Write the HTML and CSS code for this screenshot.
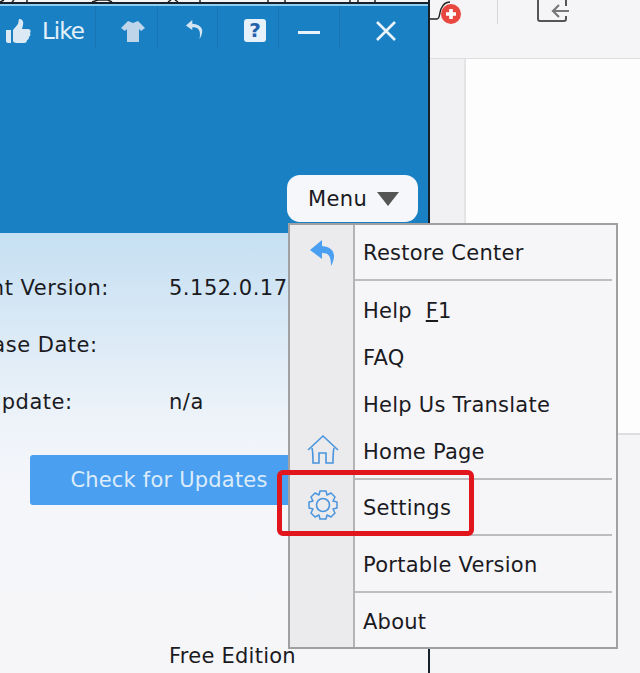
FILE: index.html
```html
<!DOCTYPE html>
<html lang="en">
<head>
<meta charset="utf-8">
<title>Menu</title>
<link rel="stylesheet" href="styles.css">
</head>
<body>
<div class="stage">
  <section class="window">
    <svg class="top-strip" width="430" height="6" viewBox="0 0 430 6"><rect y="2" width="430" height="2" fill="#15202a"/><rect y="4" width="430" height="2" fill="#8fcdf0"/><path d="M0 2l4-2M12 2l2-2M27 2v-2M92 2l6-2h10l4 2M168 2l3-2M178 2l-3-2M200 2v-2M268 2v-2M285 2v-2M350 2v-2M358 2v-2M375 2v-2" stroke="#222" stroke-width="1.5" fill="none"/></svg>
    <header class="hero">
      <div class="toolbar">
        <div class="tool tool-like">
          <svg width="26" height="26" viewBox="0 0 26 26"><path d="M1 12h5v13H3a2 2 0 0 1-2-2zM8 12l5-6 1-5c3 0 5 2 4 6l-1 4h6c3 0 3 3 2 4 1 2 0 3-1 4 0 2-1 3-2 3 0 2-1 3-3 3H12c-2 0-4-1-4-2z" fill="#dbe9f4"/></svg>
          <span>Like</span>
        </div>
        <div class="tool tool-shirt">
          <svg width="26" height="22" viewBox="0 0 26 22"><path d="M8 1l5 2 5-2 7 7-4 3-2-2v13H7V9l-2 2-4-3z" fill="#bfd6ea"/></svg>
        </div>
        <div class="tool tool-back">
          <svg width="20" height="24" viewBox="0 0 22 26"><path d="M8 1L1 7l7 5V9c6 0 10 2 8 13 6-10 3-16-8-17z" fill="#d3e4f2"/></svg>
        </div>
        <div class="tool tool-help"><span class="help-box">?</span></div>
        <div class="tool tool-min"><span class="min-bar"></span></div>
        <div class="tool tool-close">
          <svg width="22" height="22" viewBox="0 0 22 22"><path d="M2 2l18 18M20 2L2 20" stroke="#e8f3fb" stroke-width="2.6" fill="none"/></svg>
        </div>
      </div>
      <button class="menu-btn" type="button"><span>Menu</span><i class="caret"></i></button>
    </header>
    <div class="info">
      <dl class="rows">
        <dt>Current Version:</dt><dd>5.152.0.17</dd>
        <dt>Release Date:</dt><dd></dd>
        <dt>Last Update:</dt><dd>n/a</dd>
      </dl>
      <div class="check">Check for Updates</div>
      <div class="edition">Free Edition</div>
    </div>
  </section>
  <section class="desk">
    <div class="desk-bar">
      <div class="plus-tab">
        <svg width="36" height="24" viewBox="0 0 36 24"><path d="M0 19h7c3 0 2-5 4-10 2-5 5-7 9-7" stroke="#222" stroke-width="1.4" fill="none"/><circle cx="21" cy="14" r="10" fill="#e8483f"/><path d="M21 9v10M16 14h10" stroke="#fff" stroke-width="3.6"/></svg>
      </div>
      <span class="bar-sep"></span>
      <svg class="exit" width="36" height="24" viewBox="0 0 36 24"><path d="M2 0v19a2 2 0 0 0 2 2h24a2 2 0 0 0 2-2v-3M30 6V0" stroke="#555" stroke-width="2" fill="none"/><path d="M33 11H17M23 5l-6 6 6 6" stroke="#777" stroke-width="2.2" fill="none"/></svg>
    </div>
    <div class="desk-main">
      <div class="desk-side"></div>
      <div class="desk-page"></div>
    </div>
  </section>

  <nav class="menu">
    <div class="group group-first">
      <div class="item"><span class="ico"><svg width="28" height="28" viewBox="0 0 28 28"><path d="M13 1L1 11l12 9v-6c6 0 9 2 9 13 6-11 3-19-9-20z" fill="#4a9ff0"/></svg></span><span class="label">Restore Center</span></div>
    </div>
    <div class="group group-main">
      <div class="item"><span class="ico"></span><span class="label">Help&nbsp; <u>F</u>1</span></div>
      <div class="item"><span class="ico"></span><span class="label">FAQ</span></div>
      <div class="item"><span class="ico"></span><span class="label">Help Us Translate</span></div>
      <div class="item"><span class="ico"><svg width="32" height="32" viewBox="0 0 32 32"><path d="M1 16L16 2l15 14M5 14c1 4 1 8 1 15h6V19h7v10h7c0-7 0-11 1-15" stroke="#4a94dd" stroke-width="1.6" fill="none"/></svg></span><span class="label">Home Page</span></div>
    </div>
    <div class="group group-settings">
      <div class="item"><span class="ico"><svg width="32" height="32" viewBox="0 0 32 32"><circle cx="16" cy="16" r="6.5" stroke="#4a94dd" stroke-width="1.6" fill="none"/><path d="M13 2h6l1 4 4-2 4 4-2 4 4 1v6l-4 1 2 4-4 4-4-2-1 4h-6l-1-4-4 2-4-4 2-4-4-1v-6l4-1-2-4 4-4 4 2z" stroke="#4a94dd" stroke-width="1.5" stroke-linejoin="round" fill="none"/></svg></span><span class="label">Settings</span></div>
    </div>
    <div class="group group-portable">
      <div class="item"><span class="ico"></span><span class="label">Portable Version</span></div>
    </div>
    <div class="group group-last">
      <div class="item"><span class="ico"></span><span class="label">About</span></div>
    </div>
  </nav>
  <div class="callout"></div>
</div>
</body>
</html>
```

FILE: styles.css
```css
* { box-sizing: border-box; }
html, body { margin: 0; padding: 0; }
body { width: 640px; height: 673px; overflow: hidden; }
.stage {
  position: relative;
  display: flex;
  width: 640px;
  height: 673px;
  overflow: hidden;
  background: #f5f5f7;
  font-family: "DejaVu Sans", sans-serif;
  font-size: 21px;
  color: #1a1a1f;
}
.window {
  flex: 0 0 430px;
  display: flex;
  flex-direction: column;
  overflow: hidden;
  border-right: 2px solid #15202a;
}
.top-strip { display: block; flex: none; }
.hero {
  flex: 0 0 227px;
  display: flex;
  flex-direction: column;
  justify-content: space-between;
  background: #1a80c4;
}
.toolbar { display: flex; height: 42px; }
.tool {
  display: flex;
  align-items: center;
  justify-content: center;
  border-right: 1px solid #1874b3;
  padding-top: 7px;
}
.tool-like { width: 96px; justify-content: flex-start; gap: 11px; padding-left: 5px; color: #e3f0fa; font-size: 23px; letter-spacing: -1px; }
.tool-shirt { width: 62px; padding-left: 12px; }
.tool-back { width: 60px; padding-left: 15px; }
.tool-help { width: 61px; padding-left: 14px; }
.tool-min { width: 61px; }
.tool-close { flex: 1; border-right: 0; justify-content: flex-start; padding-left: 35px; }
.help-box {
  display: block;
  width: 22px;
  height: 23px;
  line-height: 23px;
  text-align: center;
  border-radius: 3px;
  background: #e6f1fa;
  color: #2461ad;
  font-weight: 700;
  font-size: 20px;
}
.min-bar { display: block; width: 22px; height: 3px; background: #e8f3fb; margin-top: 3px; }
.menu-btn {
  align-self: flex-end;
  display: flex;
  align-items: center;
  gap: 10px;
  width: 131px;
  height: 47px;
  margin: 0 10px 11px 0;
  padding: 0 0 0 21px;
  border: 0;
  border-radius: 13px;
  background: #f6f7fa;
  color: #1a1a1f;
  font: inherit;
  letter-spacing: .4px;
}
.caret { border-style: solid; border-width: 14px 11px 0; border-color: #555 transparent transparent; }
.info {
  flex: 1;
  position: relative;
  background: linear-gradient(#c5dff2 0, #eef3f9 190px, #f5f6fa 260px, #f6f6f8 100%);
  padding-top: 31px;
}
.rows {
  display: grid;
  grid-template-columns: 238px 1fr;
  grid-auto-rows: 57px;
  margin: 0 0 0 -69px;
  letter-spacing: .5px;
}
.rows dt, .rows dd { margin: 0; line-height: 49px; height: 49px; white-space: nowrap; }
.rows dt:nth-of-type(2) { margin-left: 14px; }
.rows dt:nth-of-type(3) { margin-left: 2px; }
.check {
  width: 278px;
  height: 50px;
  margin: 20px 0 0 30px;
  line-height: 50px;
  text-align: center;
  letter-spacing: .2px;
  border-radius: 3px;
  background: #4a9ff0;
  color: #dcecfb;
}
.edition { margin: 138px 0 0 169px; line-height: 26px; white-space: nowrap; letter-spacing: .25px; }
.desk { flex: 1; display: flex; flex-direction: column; }
.desk-bar {
  flex: 0 0 59px;
  display: flex;
  align-items: flex-start;
  border-bottom: 1px solid #dedee0;
}
.plus-tab { width: 67px; height: 24px; }
.bar-sep { width: 1px; height: 24px; background: #d5d5d7; }
.exit { margin-left: 38px; }
.desk-main { flex: 0 0 376px; display: flex; border-bottom: 2px solid #dedee0; }
.desk-side { width: 36px; background: #f1f1f3; border-right: 2px solid #e4e4e6; }
.desk-page { flex: 1; background: #fdfdfe; }
.menu {
  position: absolute;
  left: 288px;
  top: 223px;
  width: 330px;
  height: 426px;
  display: flex;
  flex-direction: column;
  border: 2px solid #a0a0a2;
  background: linear-gradient(90deg, #ebebed 0 63px, #b4b4b6 63px 65px, #f6f6f8 65px);
}
.group { position: relative; flex: none; }
.group::after {
  content: "";
  position: absolute;
  left: 65px;
  right: 4px;
  bottom: 0;
  height: 2px;
  background: #bdbdc0;
}
.group-first { height: 56px; }
.group-main { height: 199px; padding-top: 6px; }
.group-settings { height: 56px; }
.group-portable { height: 57px; }
.group-last { flex: 1; padding-top: 8px; }
.group-last::after { display: none; }
.item { display: flex; align-items: center; }
.group-first .item { height: 55px; }
.group-main .item { height: 47px; }
.group-settings .item { height: 56px; }
.group-portable .item { height: 57px; }
.group-last .item { height: 42px; }
.group-main .ico svg { margin-top: -4px; }
.group-settings .ico svg { margin-top: -6px; }
.ico { flex: 0 0 65px; display: flex; align-items: center; justify-content: center; }
.label { padding-left: 8px; white-space: nowrap; letter-spacing: .25px; }
.callout {
  position: absolute;
  left: 277px;
  top: 470px;
  width: 197px;
  height: 66px;
  border: 5px solid #e0161c;
  border-radius: 6px;
}
```
